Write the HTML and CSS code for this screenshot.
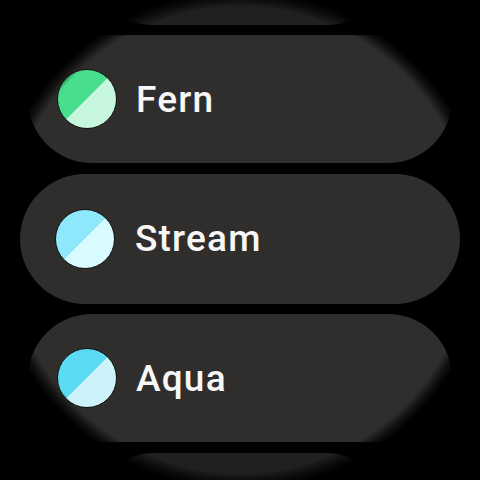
FILE: index.html
```html
<!DOCTYPE html>
<html>
<head>
<meta charset="utf-8">
<link rel="stylesheet" href="styles.css">
</head>
<body>
<div class="screen">
  <div class="list">
    <div class="chip chip-ghost"></div>
    <div class="chip chip-side">
      <span class="swatch swatch-fern"></span>
      <span class="label">Fern</span>
    </div>
    <div class="chip chip-center">
      <span class="swatch swatch-stream"></span>
      <span class="label">Stream</span>
    </div>
    <div class="chip chip-side">
      <span class="swatch swatch-aqua"></span>
      <span class="label">Aqua</span>
    </div>
    <div class="chip chip-ghost"></div>
  </div>
  <div class="bezel"></div>
</div>
</body>
</html>
```

FILE: styles.css
```css
html, body {
  margin: 0;
  padding: 0;
  background: #000;
}

.screen {
  position: relative;
  width: 480px;
  height: 480px;
  overflow: hidden;
  background: #000;
}

.list {
  box-sizing: border-box;
  height: 480px;
  padding-bottom: 3px;
  display: flex;
  flex-direction: column;
  align-items: center;
  justify-content: center;
  gap: 10.5px;
}

.chip {
  flex: none;
  box-sizing: border-box;
  height: 128px;
  border-radius: 64px;
  background: #302e2d;
  display: flex;
  align-items: center;
  gap: 19px;
}

.chip-side {
  width: 424px;
  padding-left: 29px;
}

.chip-center {
  width: 440px;
  height: 130px;
  border-radius: 65px;
  padding-left: 35px;
  gap: 20px;
}

.chip-ghost {
  width: 300px;
  background: #202020;
}

.swatch {
  flex: none;
  box-sizing: border-box;
  width: 60px;
  height: 60px;
  border-radius: 50%;
  border: 1.5px solid #161616;
}

.swatch-fern {
  background: linear-gradient(135deg, #47df8e 50%, #c6f7dc 50%);
}

.swatch-stream {
  background: linear-gradient(135deg, #8fe7fb 50%, #d7fbff 50%);
}

.swatch-aqua {
  background: linear-gradient(135deg, #5bdbf3 50%, #cdf3fa 50%);
}

.label {
  font-family: Roboto, "Noto Sans", sans-serif;
  font-weight: 500;
  font-size: 37px;
  color: #f7f7f7;
  line-height: 1;
  letter-spacing: 1.2px;
}

.bezel {
  position: absolute;
  inset: 0;
  pointer-events: none;
  background: radial-gradient(circle at 50% 50%, rgba(0,0,0,0) 233px, rgba(0,0,0,0.6) 241px, #000 249px);
}
```
